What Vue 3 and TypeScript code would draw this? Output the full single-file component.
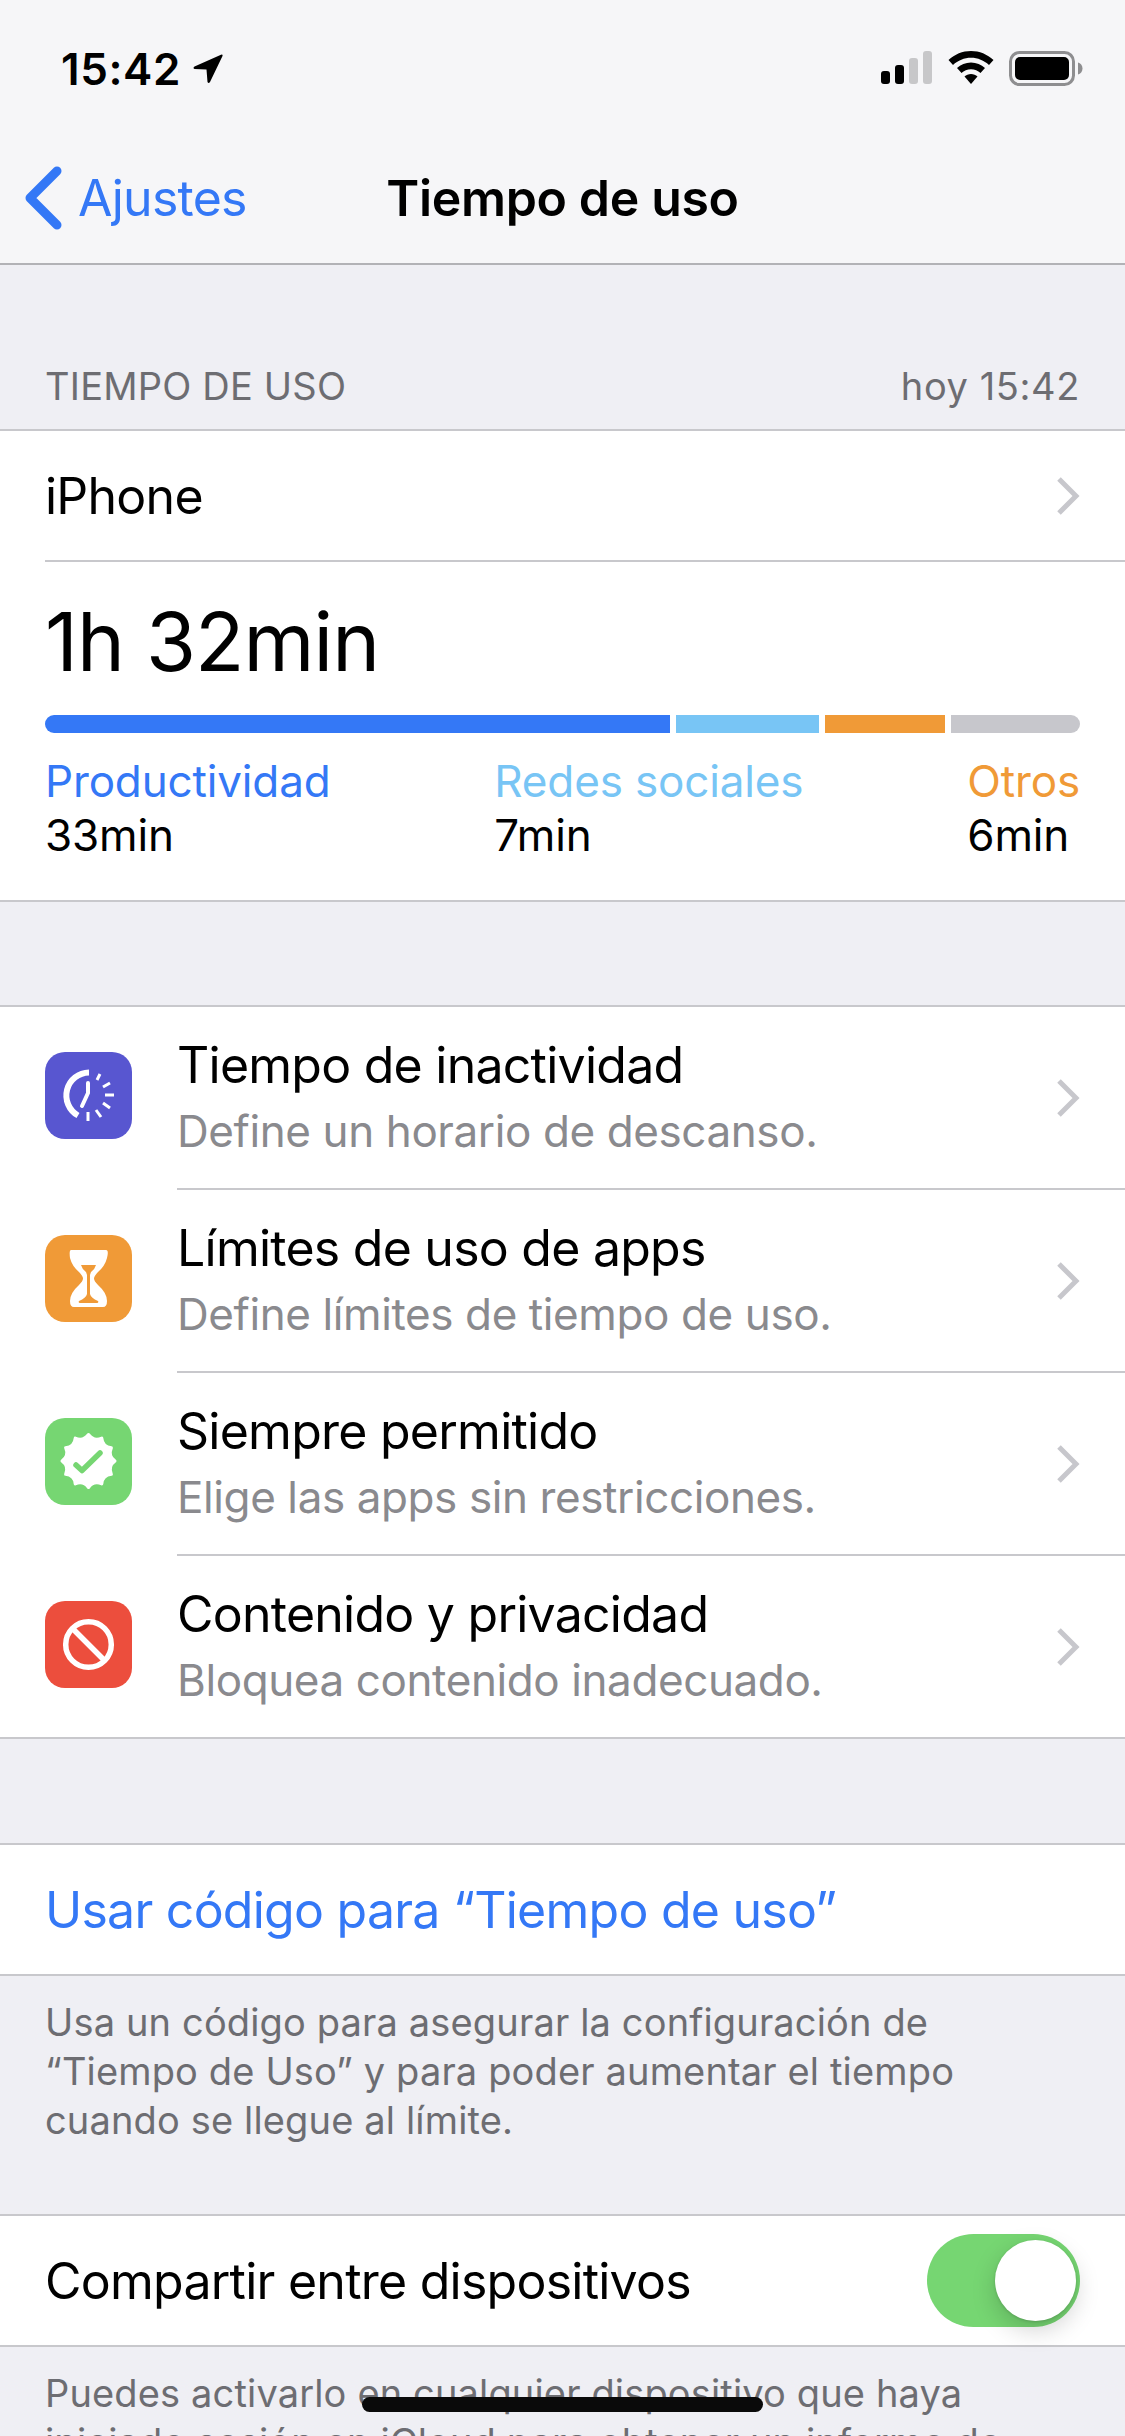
<script setup lang="ts">
type Row = { title: string; subtitle: string; icon: string };

const rows: Row[] = [
  { title: 'Tiempo de inactividad', subtitle: 'Define un horario de descanso.', icon: 'downtime' },
  { title: 'Límites de uso de apps', subtitle: 'Define límites de tiempo de uso.', icon: 'limits' },
  { title: 'Siempre permitido', subtitle: 'Elige las apps sin restricciones.', icon: 'allowed' },
  { title: 'Contenido y privacidad', subtitle: 'Bloquea contenido inadecuado.', icon: 'content' },
];

const ticks = [
  [52, 28, 55, 22],
  [58, 35, 65, 31],
  [60, 43, 69, 43],
  [58, 51, 65, 56],
  [51, 58, 56, 65],
  [43, 60, 43, 69],
];

// scalloped badge outline: 12 peaks joined by concave curves
function badgePath(cx: number, cy: number, peak: number, notch: number): string {
  const lobes = 12;
  const at = (r: number, t: number) => {
    const a = (t / lobes) * Math.PI * 2 - Math.PI / 2;
    return `${(cx + r * Math.cos(a)).toFixed(1)} ${(cy + r * Math.sin(a)).toFixed(1)}`;
  };
  let d = `M${at(peak, 0)}`;
  for (let i = 0; i < lobes; i++) {
    d += `Q${at(notch, i + 0.5)} ${at(peak, i + 1)}`;
  }
  return d + 'Z';
}

const badge = badgePath(43.5, 43, 26.5, 20);
</script>

<template>
  <div class="screen">
    <header class="top">
      <div class="status">
        <div class="status__left">
          <span class="status__time">15:42</span>
          <svg class="status__arrow" width="30" height="30" viewBox="0 0 30 30">
            <path d="M28 .7 1.500 12.500Q-.5 14 1.500 15L13.500 15.500 14.500 28Q15.500 30 17 28L29.500 2Q30 0 28 .7Z" fill="#000" />
          </svg>
        </div>
        <div class="status__right">
          <svg width="52" height="33" viewBox="0 0 52 33">
            <rect x="0" y="20" width="9" height="13" rx="3" fill="#000" />
            <rect x="14" y="14" width="9" height="19" rx="3" fill="#000" />
            <rect x="28" y="7" width="9" height="26" rx="3" fill="#c7c7c9" />
            <rect x="42" y="0" width="9" height="33" rx="3" fill="#c7c7c9" />
          </svg>
          <svg width="46" height="33" viewBox="0 0 46 33">
            <path d="M23 0C14.500 0 6.700 3.300 0.500 9l4.500 5C10 9.500 16.200 6.800 23 6.800S36 9.500 41 14l4.500-5C39.300 3.300 31.500 0 23 0Z" fill="#000" />
            <path d="M23 11.500c-5.400 0-10.300 2.100-14 5.500l4.500 5c2.500-2.300 5.800-3.700 9.500-3.700s7 1.400 9.500 3.700l4.500-5c-3.700-3.400-8.600-5.500-14-5.500Z" fill="#000" />
            <path d="M23 23c-2.500 0-4.800 1-6.500 2.500L23 33l6.500-7.500C27.800 24 25.500 23 23 23Z" fill="#000" />
          </svg>
          <svg width="74" height="35" viewBox="0 0 74 35">
            <rect x="1.500" y="1.500" width="63" height="32" rx="9" fill="none" stroke="#8e8e90" stroke-width="3" />
            <rect x="6" y="6" width="54" height="23" rx="5" fill="#000" />
            <path d="M69 11.500c2.500.5 4.500 3 4.500 6s-2 5.500-4.500 6Z" fill="#8e8e90" />
          </svg>
        </div>
      </div>
      <nav class="nav">
        <div class="nav__back">
          <svg width="38" height="64" viewBox="0 0 38 64">
            <path d="M33 5 6 32l27 27" fill="none" stroke="#3478f6" stroke-width="9" stroke-linecap="round" stroke-linejoin="round" />
          </svg>
          <span>Ajustes</span>
        </div>
        <h1 class="nav__title">Tiempo de uso</h1>
        <div></div>
      </nav>
    </header>

    <div class="section-label">
      <span>TIEMPO DE USO</span>
      <span class="section-label__date">hoy 15:42</span>
    </div>

    <section class="card">
      <div class="device">
        <span>iPhone</span>
        <svg class="chevron" width="24" height="40" viewBox="0 0 24 40">
          <path d="M3 3l17 17L3 37" fill="none" stroke="#c7c7cc" stroke-width="5" />
        </svg>
      </div>
      <div class="usage">
        <div class="usage__total">1h 32min</div>
        <div class="bar">
          <span class="bar__seg bar__seg--blue"></span>
          <span class="bar__seg bar__seg--sky"></span>
          <span class="bar__seg bar__seg--orange"></span>
          <span class="bar__seg bar__seg--gray"></span>
        </div>
        <div class="legend">
          <div class="legend__item">
            <span class="legend__name legend__name--blue">Productividad</span>
            <span>33min</span>
          </div>
          <div class="legend__item">
            <span class="legend__name legend__name--sky">Redes sociales</span>
            <span>7min</span>
          </div>
          <div class="legend__item">
            <span class="legend__name legend__name--orange">Otros</span>
            <span>6min</span>
          </div>
        </div>
      </div>
    </section>

    <section class="card card--rows">
      <div v-for="row in rows" :key="row.title" class="row">
        <div class="row__icon" :class="`row__icon--${row.icon}`">
          <svg width="87" height="87" viewBox="0 0 87 87">
            <template v-if="row.icon === 'downtime'">
              <path d="M44 20.500A23 23 0 0 0 33 63.500" fill="none" stroke="#fff" stroke-width="6" />
              <path d="M43 31v10l-6 13" fill="none" stroke="#fff" stroke-width="4" stroke-linecap="round" stroke-linejoin="round" />
              <line v-for="t in ticks" :key="t[0] + '-' + t[1]" :x1="t[0]" :y1="t[1]" :x2="t[2]" :y2="t[3]" stroke="#fff" stroke-width="3" />
            </template>
            <template v-else-if="row.icon === 'limits'">
              <path d="M26 15H61Q64 15 62 23Q60 31 53 37Q49 41 49 43.500Q49 46 53 50Q62 58 62 66Q62 72 58 72H29Q25 72 25 66Q25 58 34 50Q38 46 38 43.500Q38 41 34 37Q27 31 25 23Q24 15 26 15Z" fill="#fff" />
              <path d="M36 30H51Q50 34 46 37L45 40V59Q46 63 53 66Q54 68 52 68H35Q33 68 34 66Q41 63 42 59V40L41 37Q37 34 36 30Z" fill="#f09a37" />
            </template>
            <template v-else-if="row.icon === 'allowed'">
              <path :d="badge" fill="#fff" stroke="#fff" stroke-width="3" stroke-linejoin="round" />
              <path d="M31 47l6 5.500L55 35" fill="none" stroke="#76d672" stroke-width="5.500" stroke-linecap="round" stroke-linejoin="round" />
            </template>
            <template v-else>
              <circle cx="43.500" cy="43.500" r="22.800" fill="none" stroke="#fff" stroke-width="5.500" />
              <line x1="27.500" y1="27.500" x2="59.500" y2="59.500" stroke="#fff" stroke-width="5.500" />
            </template>
          </svg>
        </div>
        <div class="row__body">
          <div class="row__text">
            <div class="row__title">{{ row.title }}</div>
            <div class="row__subtitle">{{ row.subtitle }}</div>
          </div>
          <svg class="chevron" width="24" height="40" viewBox="0 0 24 40">
            <path d="M3 3l17 17L3 37" fill="none" stroke="#c7c7cc" stroke-width="5" />
          </svg>
        </div>
      </div>
    </section>

    <section class="card card--single card--passcode">
      <span class="link">Usar código para “Tiempo de uso”</span>
    </section>
    <p class="note">Usa un código para asegurar la configuración de “Tiempo de Uso” y para poder aumentar el tiempo cuando se llegue al límite.</p>

    <section class="card card--single card--share">
      <span>Compartir entre dispositivos</span>
      <div class="toggle"><span class="toggle__thumb"></span></div>
    </section>
    <p class="note note--tight">Puedes activarlo en cualquier dispositivo que haya iniciado sesión en iCloud para obtener un informe de</p>

    <div class="home-indicator"></div>
  </div>
</template>

<style scoped>
.screen {
  position: relative;
  height: 2436px;
  overflow: hidden;
  background: #efeff4;
  color: #000;
  font-family: Inter, "Noto Sans", sans-serif;
  font-size: 50px;
  letter-spacing: -0.75px;
}

.top {
  background: #f6f6f8;
  border-bottom: 2px solid #b2b2b6;
  height: 265px;
  box-sizing: border-box;
}

.status {
  height: 132px;
  padding: 51px 42px 0 61px;
  box-sizing: border-box;
  display: flex;
  justify-content: space-between;
  align-items: flex-start;
}

.status__left {
  display: flex;
  align-items: center;
  gap: 12px;
}

.status__time {
  font-size: 44px;
  line-height: 36px;
  font-weight: 600;
  letter-spacing: 0.6px;
}

.status__right {
  display: flex;
  align-items: flex-start;
  gap: 15px;
}

.nav {
  display: grid;
  grid-template-columns: 1fr auto 1fr;
  align-items: center;
  height: 131px;
}

.nav__back {
  display: flex;
  align-items: center;
  gap: 16px;
  margin-left: 24px;
  color: #3478f6;
}

.nav__title {
  margin: 0;
  font-size: 50px;
  font-weight: 600;
  letter-spacing: -0.35px;
}

.section-label {
  display: flex;
  justify-content: space-between;
  align-items: flex-end;
  height: 164px;
  padding: 0 45px 20px;
  box-sizing: border-box;
  font-size: 38px;
  letter-spacing: 0.2px;
  color: #6d6d72;
}

.section-label__date {
  letter-spacing: 0.6px;
}

.card {
  background: #fff;
  border-top: 2px solid #c8c8cc;
  border-bottom: 2px solid #c8c8cc;
}

.device {
  height: 129px;
  margin-left: 45px;
  padding-right: 45px;
  display: flex;
  align-items: center;
  justify-content: space-between;
  border-bottom: 2px solid #c8c8cc;
}

.usage {
  padding: 30px 45px 0;
  height: 338px;
  box-sizing: border-box;
}

.usage__total {
  font-size: 81px;
  line-height: 100px;
  letter-spacing: -0.9px;
}

.bar {
  display: flex;
  gap: 6px;
  height: 18px;
  margin-top: 23px;
  border-radius: 9px;
  overflow: hidden;
}

.bar__seg--blue { width: 625px; background: #3478f6; }
.bar__seg--sky { width: 143px; background: #78c5f5; }
.bar__seg--orange { width: 120px; background: #f09a37; }
.bar__seg--gray { flex: 1; background: #c7c7cc; }

.legend {
  display: flex;
  justify-content: space-between;
  margin-top: 21px;
  font-size: 44px;
  line-height: 54px;
  letter-spacing: -0.15px;
}

.legend__item {
  display: flex;
  flex-direction: column;
}

.legend__name--blue { color: #3478f6; }
.legend__name--sky { color: #78c5f5; }
.legend__name--orange { color: #f09a37; }

.card--rows {
  margin-top: 103px;
}

.row {
  display: flex;
  height: 183px;
}

.row:last-child {
  height: 181px;
}

.row__icon {
  flex: none;
  width: 87px;
  height: 87px;
  margin: 45px 45px 0;
  border-radius: 20px;
  overflow: hidden;
}

.row__icon--downtime { background: #5856d0; }
.row__icon--limits { background: #f09a37; }
.row__icon--allowed { background: #76d672; }
.row__icon--content { background: #ec4e3d; }

.row__body {
  flex: 1;
  display: flex;
  align-items: center;
  justify-content: space-between;
  padding-right: 45px;
  border-bottom: 2px solid #c8c8cc;
}

.row:last-child .row__body {
  border-bottom: none;
}

.row__text {
  align-self: flex-start;
  padding-top: 28px;
}

.row__title {
  line-height: 60px;
}

.row__subtitle {
  margin-top: 9px;
  font-size: 44px;
  line-height: 54px;
  letter-spacing: -0.4px;
  color: #8a8a8e;
}

.card--single {
  display: flex;
  align-items: center;
  height: 133px;
  box-sizing: border-box;
  padding: 0 45px;
}

.card--passcode {
  margin-top: 104px;
}

.link {
  color: #3478f6;
}

.note {
  margin: 0;
  padding: 22px 45px 0;
  height: 238px;
  box-sizing: border-box;
  font-size: 38px;
  line-height: 49px;
  letter-spacing: 0.15px;
  color: #6d6d72;
}

.card--share {
  justify-content: space-between;
}

.note--tight {
  padding-top: 22px;
  height: auto;
}

.toggle {
  position: relative;
  width: 153px;
  height: 93px;
  border-radius: 47px;
  background: #76d672;
}

.toggle__thumb {
  position: absolute;
  top: 6px;
  right: 4px;
  width: 81px;
  height: 81px;
  border-radius: 50%;
  background: #fff;
  box-shadow: 0 9px 24px rgba(0, 0, 0, 0.18), 0 1px 3px rgba(0, 0, 0, 0.15);
}

.home-indicator {
  position: absolute;
  left: 362px;
  top: 2397px;
  width: 401px;
  height: 15px;
  border-radius: 8px;
  background: #0a0a0a;
}
</style>

<style>
body {
  background: #efeff4;
}
</style>
